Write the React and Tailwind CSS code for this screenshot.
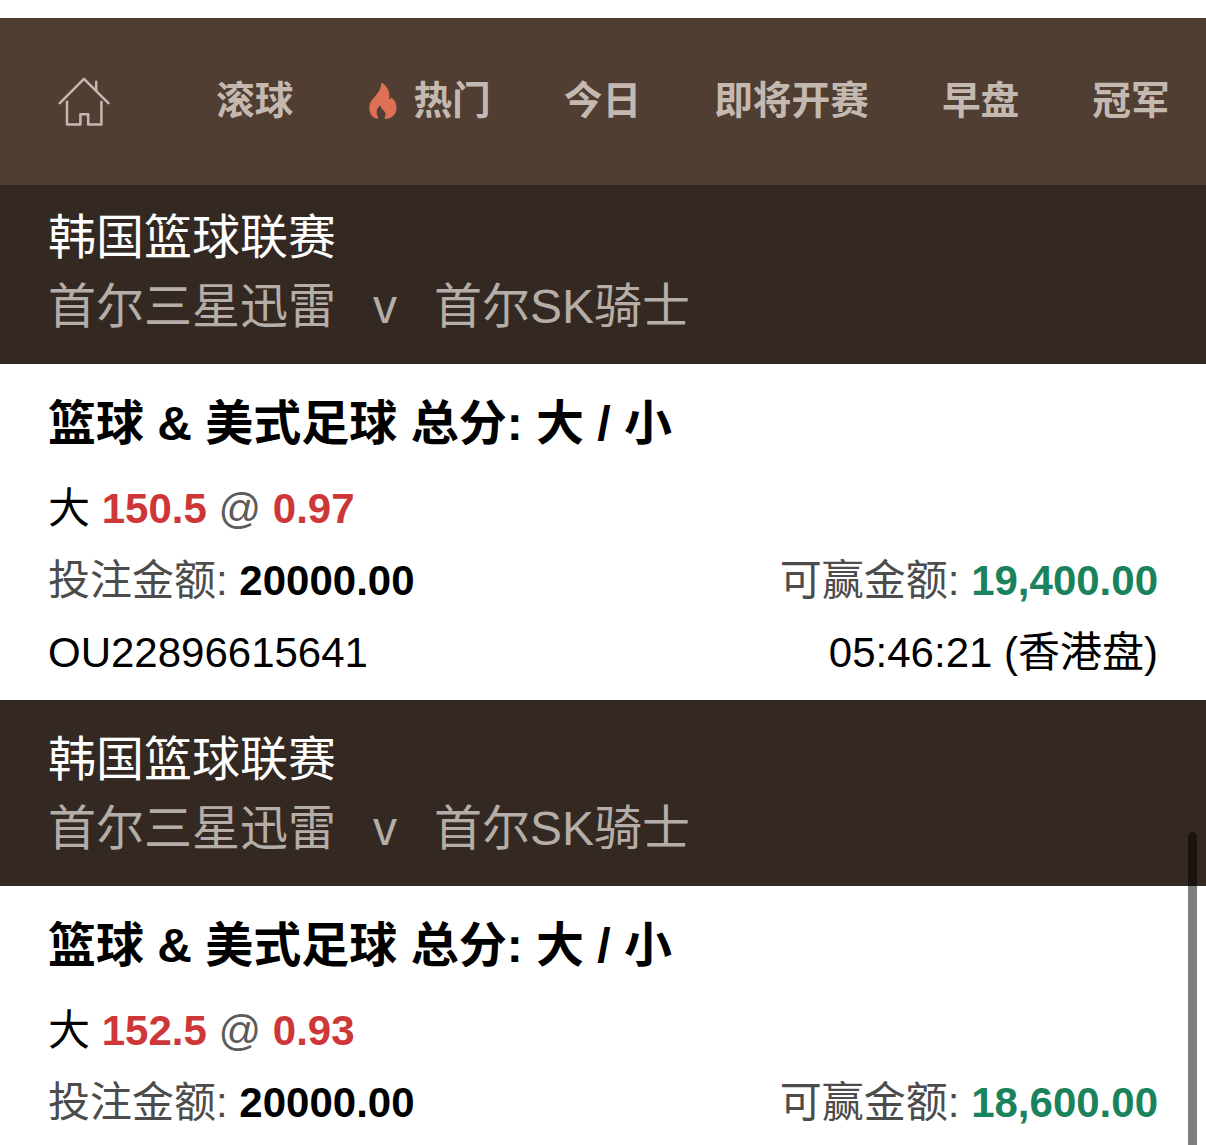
import { useState } from "react";

const tabs = [
  { id: "live", label: "滚球" },
  { id: "hot", label: "热门", hot: true },
  { id: "today", label: "今日" },
  { id: "soon", label: "即将开赛" },
  { id: "early", label: "早盘" },
  { id: "champion", label: "冠军" },
];

const bets = [
  {
    id: 1,
    league: "韩国篮球联赛",
    home: "首尔三星迅雷",
    away: "首尔SK骑士",
    market: "篮球 & 美式足球 总分: 大 / 小",
    pick: "大",
    line: "150.5",
    odds: "0.97",
    stake: "20000.00",
    win: "19,400.00",
    ref: "OU22896615641",
    time: "05:46:21 (香港盘)",
  },
  {
    id: 2,
    league: "韩国篮球联赛",
    home: "首尔三星迅雷",
    away: "首尔SK骑士",
    market: "篮球 & 美式足球 总分: 大 / 小",
    pick: "大",
    line: "152.5",
    odds: "0.93",
    stake: "20000.00",
    win: "18,600.00",
  },
];

function HomeIcon() {
  return (
    <svg className="h-[50px] w-[52px]" viewBox="0 0 52 50" fill="none" stroke="currentColor" strokeWidth="2.5" strokeLinecap="round" strokeLinejoin="round">
      <path d="M1.8 26.2 26 1.8l24.4 24.4" />
      <path d="M38.2 4.8v9" />
      <path d="M9 24.8v22.6h13.4V37.2h7.8v10.2h13.2V24.8" />
    </svg>
  );
}

function FlameIcon() {
  return (
    <svg className="h-[38px] w-7" viewBox="0 0 28 38" fill="#dd7055">
      <path d="M12.2.5C18.2 3.600 21.400 9.600 20.200 17.600c1.200-.3 1.900-1 2.300-2 3.300 2.600 5 6.200 5 10.200 0 5.700-3.500 10-9.200 11-1.300.3-2.700.2-2.800-.4-.1-.8.8-1.900 1.100-3.700.5-3.900-4.800-4.500-5.200-9.400-3.300 2.500-4.600 6.400-3.200 10 .7 1.500 1.500 2.900.3 3.400C4.400 36.700.4 32.300.3 26.300.2 21.500 2.600 18.200 5.900 14.600 9.500 10.600 12.300 6.600 12.200.5Z" />
    </svg>
  );
}

function BetCard({ bet }) {
  return (
    <div>
      <div className="h-[186px] bg-[#342922] px-12 pt-[25px] text-[48px] leading-[69px] whitespace-nowrap">
        <p className="text-white">{bet.league}</p>
        <p className="flex text-[#b5ada8]">
          <span>{bet.home}</span>
          <span className="w-[98px] text-center">v</span>
          <span>{bet.away}</span>
        </p>
      </div>

      <div className="h-[336px] bg-white px-12 pt-6 text-[42px] leading-[72px] whitespace-nowrap text-black">
        <h2 className="mb-[13px] text-[48px] leading-[72px] font-bold">{bet.market}</h2>
        <p>
          {bet.pick} <b className="text-[#cd3737]">{bet.line}</b> <span className="text-[#5c5c5c]">@</span>{" "}
          <b className="text-[#cd3737]">{bet.odds}</b>
        </p>
        <div className="flex justify-between">
          <p>
            <span className="text-[#4c4c4c]">投注金额:</span> <b>{bet.stake}</b>
          </p>
          <p>
            <span className="text-[#4c4c4c]">可赢金额:</span> <b className="text-[#1a825c]">{bet.win}</b>
          </p>
        </div>
        <div className="flex justify-between">
          <p>{bet.ref}</p>
          <p>{bet.time}</p>
        </div>
      </div>
    </div>
  );
}

export default function App() {
  const [active, setActive] = useState("live");

  return (
    <div className="relative h-[1145px] w-[1206px] overflow-hidden bg-white font-['Liberation_Sans','Noto_Sans_CJK_SC',sans-serif]">
      {/* Sport tabs */}
      <nav className="relative z-10 mt-[18px] flex h-[167px] items-center bg-[#503e33] pl-[58px] text-[#c4b9b0]">
        <button className="mt-px mr-[106px]" aria-label="首页">
          <HomeIcon />
        </button>
        <div className="flex gap-[73px] text-[38.7px] leading-none font-bold whitespace-nowrap">
          {tabs.map((tab) => (
            <button
              key={tab.id}
              aria-pressed={active === tab.id}
              onClick={() => setActive(tab.id)}
              className={`flex items-center ${tab.hot ? "gap-4 pl-[3px]" : ""}`}
            >
              {tab.hot && <FlameIcon />}
              <span>{tab.label}</span>
            </button>
          ))}
        </div>
      </nav>

      {/* Bet list, scrolled slightly under the nav */}
      <div className="-mt-[7px]">
        {bets.map((bet) => (
          <BetCard key={bet.id} bet={bet} />
        ))}
      </div>

      <div className="absolute top-[832px] right-[9px] z-20 h-[400px] w-[9px] rounded-full bg-black/50" />
    </div>
  );
}
